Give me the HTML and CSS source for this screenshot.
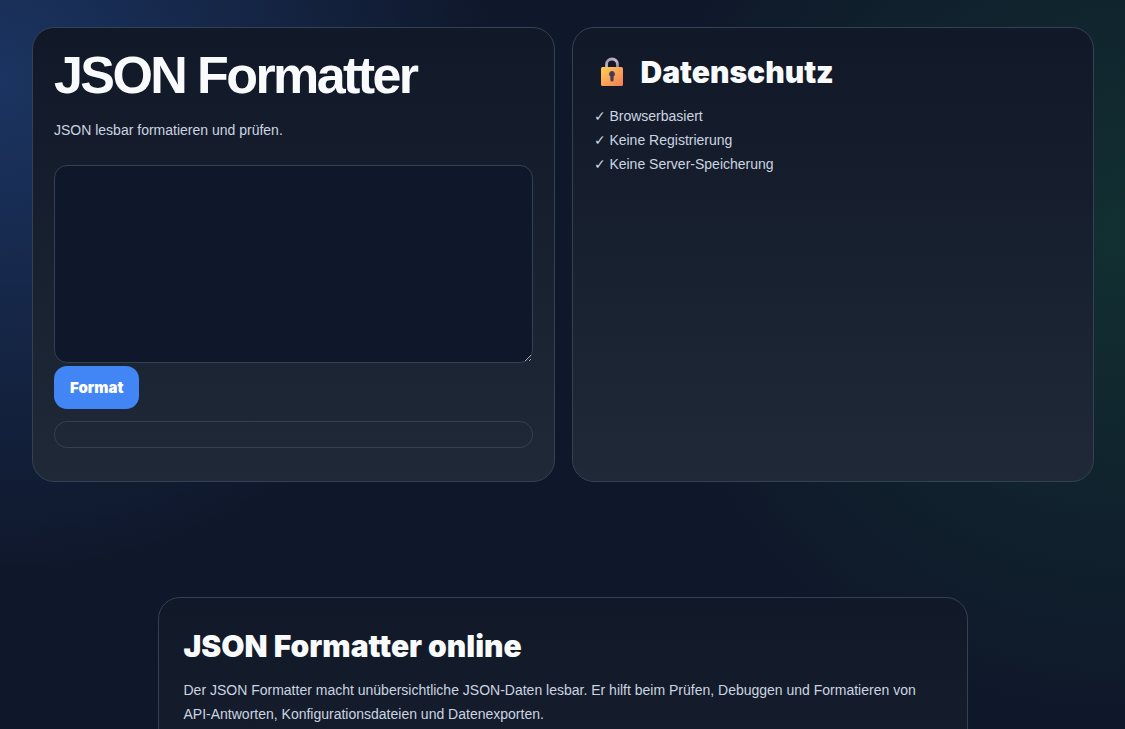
FILE: index.html
```html
<!DOCTYPE html>
<html lang="de">
<head>
<meta charset="utf-8">
<meta name="viewport" content="width=device-width, initial-scale=1">
<title>JSON Formatter</title>
<link rel="stylesheet" href="styles.css">
</head>
<body>
<main class="tool">
  <section class="card">
    <h1 class="title">JSON Formatter</h1>
    <p class="lead">JSON lesbar formatieren und prüfen.</p>
    <textarea class="input" aria-label="JSON"></textarea>
    <button class="button" type="button">Format</button>
    <pre class="output"></pre>
  </section>
  <section class="card">
    <h2 class="heading privacy-heading">
      <svg class="lock" viewBox="0 0 36 32" aria-hidden="true">
        <defs>
          <linearGradient id="body" x1="0" y1="0" x2="1" y2="1">
            <stop offset="0" stop-color="#ffcf58"/>
            <stop offset="1" stop-color="#f47b55"/>
          </linearGradient>
          <linearGradient id="shackle" x1="0" y1="0" x2="1" y2="1">
            <stop offset="0" stop-color="#9f98a5"/>
            <stop offset=".5" stop-color="#c7bccd"/>
            <stop offset="1" stop-color="#8d7d99"/>
          </linearGradient>
        </defs>
        <path d="M12.500 13V8.500a5.500 5.500 0 0 1 11 0V13" fill="none" stroke="url(#shackle)" stroke-width="2.800"/>
        <rect x="7" y="11" width="22" height="19" rx="1.500" fill="url(#body)"/>
        <path d="M18 15a3 3 0 0 0-1.600 5.500V24a1.600 1.600 0 0 0 3.200 0v-3.500A3 3 0 0 0 18 15z" fill="#483b57"/>
      </svg>
      Datenschutz
    </h2>
    <p class="text">✓ Browserbasiert<br>✓ Keine Registrierung<br>✓ Keine Server-Speicherung</p>
  </section>
</main>
<article class="card article">
  <h2 class="heading">JSON Formatter online</h2>
  <p class="text">Der JSON Formatter macht unübersichtliche JSON-Daten lesbar. Er hilft beim Prüfen, Debuggen und Formatieren von API-Antworten, Konfigurationsdateien und Datenexporten.</p>
</article>
</body>
</html>
```
FILE: styles.css
```css
* {
  box-sizing: border-box;
}

body {
  margin: 0;
  min-height: 100vh;
  overflow-x: hidden;
  color: #cbd5e1;
  font: 14px/24px "Liberation Sans", Arial, sans-serif;
  background:
    radial-gradient(circle at 0 80px, rgba(59, 130, 246, 0.27), transparent 500px),
    radial-gradient(circle at 100% 235px, rgba(34, 197, 94, 0.14), transparent 500px),
    #0f172a;
}

.tool {
  display: grid;
  grid-template-columns: 1fr 1fr;
  gap: 17px;
  padding: 27px 31px 0 32px;
}

.card {
  padding: 21px;
  border: 1px solid #334155;
  border-radius: 22px;
  background: linear-gradient(#111827, #1f2937);
}

.title {
  margin: 0 0 17px;
  color: #f8fafc;
  font-size: 52px;
  line-height: 52px;
  letter-spacing: -0.05em;
}

.lead {
  margin: 0 0 23px;
}

.input {
  display: block;
  width: 100%;
  height: 198px;
  padding: 14px;
  border: 1px solid #334155;
  border-radius: 13px;
  background: #0f172a;
  color: #f8fafc;
  font: inherit;
  resize: vertical;
}

.button {
  display: block;
  margin-top: 3px;
  padding: 11px 16px;
  border: 0;
  border-radius: 13px;
  background: #4285f4;
  color: #fff;
  font: 900 15px/21px "Arial Black", Inter, sans-serif;
}

.output {
  margin: 12px 0;
  padding: 13px 12px 12px;
  border: 1px solid #334155;
  border-radius: 13px;
}

.heading {
  margin: 0 0 9px;
  color: #f8fafc;
  font: 900 30px/46px "Arial Black", Inter, sans-serif;
}

.privacy-heading {
  display: flex;
  align-items: center;
  gap: 11px;
}

.lock {
  width: 36px;
  height: 32px;
}

.text {
  margin: 0;
}

.article {
  max-width: 810px;
  min-height: 480px;
  margin: 115px auto 32px;
  padding: 25px;
}
```
